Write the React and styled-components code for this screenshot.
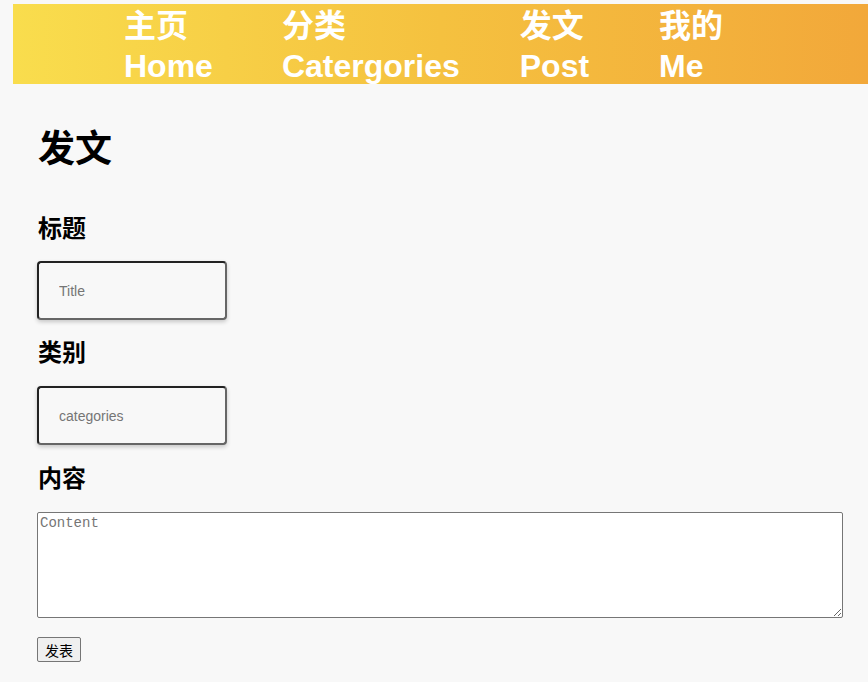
import React from 'react'
import styled, { createGlobalStyle } from 'styled-components'

const GlobalStyle = createGlobalStyle`
  body {
    margin: 0;
    background: #f8f8f8;
    font-family: "Liberation Sans", Arial, "Noto Sans CJK SC", sans-serif;
  }
`;

const NavBar = styled.nav`
  margin: 4px 0 0 13px;
  height: 80px;
  padding-left: 111px;
  display: flex;
  background: linear-gradient(90deg, #f9dd4d 0%, #f5c13f 50%, #f2a83a 100%);
`;

const NavItem = styled.a`
  display: block;
  margin-right: ${props => props.gap}px;
  color: #fff;
  font-size: 32px;
  font-weight: bold;
  line-height: 40px;
  padding-top: 2px;
  text-decoration: none;
  cursor: pointer;
`;

const Main = styled.main`
  padding: 0 25px 0 37px;
`;

const Title = styled.h1`
  margin: 37px 0 0 1px;
  font-size: 37px;
  line-height: 50px;
  font-family: "Noto Sans CJK SC", sans-serif;
`;

const Label = styled.h3`
  margin: ${props => props.top}px 0 0 1px;
  font-size: 24px;
  line-height: 32px;
  font-family: "Noto Sans CJK SC", sans-serif;
`;

const Field = styled.input`
  display: block;
  box-sizing: border-box;
  width: 190px;
  height: 59px;
  margin-top: ${props => props.top}px;
  padding: 0 20px;
  border: 2px solid #222;
  border-bottom-color: #666;
  border-right-color: #666;
  border-radius: 4px;
  background: #f8f8f8;
  box-shadow: 0 2px 4px rgba(0, 0, 0, 0.2);
  font-family: "Liberation Sans", Arial, sans-serif;
  font-size: 14px;
  &::placeholder { color: #757575; }
`;

const Content = styled.textarea`
  display: block;
  box-sizing: border-box;
  width: 806px;
  height: 106px;
  margin-top: 19px;
  border: 1px solid #767676;
  border-radius: 2px;
  background: #fff;
  font-family: "Liberation Mono", monospace;
  font-size: 14px;
  &::placeholder { color: #757575; }
`;

const Submit = styled.button`
  margin-top: 19px;
  height: 25px;
  padding: 1px 7px;
  font-size: 14px;
  font-family: "Noto Sans CJK SC", sans-serif;
  background: #efefef;
  border: 1px solid #767676;
  border-radius: 2px;
`;

const links = [
  { cn: '主页', en: 'Home', gap: 69 },
  { cn: '分类', en: 'Catergories', gap: 60 },
  { cn: '发文', en: 'Post', gap: 70 },
  { cn: '我的', en: 'Me', gap: 0 },
];

export default function App() {
  return (
    <>
      <GlobalStyle />
      <NavBar>
        {links.map(l => (
          <NavItem key={l.en} gap={l.gap}>
            {l.cn}<br />{l.en}
          </NavItem>
        ))}
      </NavBar>
      <Main>
        <Title>发文</Title>
        <Label top={40}>标题</Label>
        <Field top={18} placeholder="Title" />
        <Label top={15}>类别</Label>
        <Field top={19} placeholder="categories" />
        <Label top={16}>内容</Label>
        <Content placeholder="Content" />
        <Submit>发表</Submit>
      </Main>
    </>
  )
}
